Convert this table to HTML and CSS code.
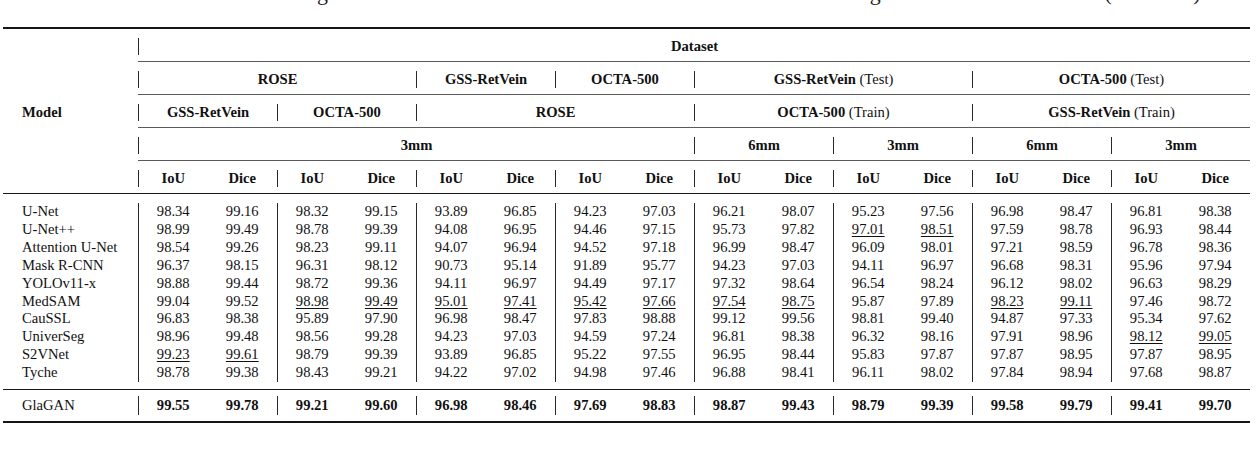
FILE: index.html
```html
<!DOCTYPE html>
<html>
<head>
<meta charset="utf-8">
<link rel="stylesheet" href="styles.css">
</head>
<body>
<div class="caption"><div class="caption-line">Results of the vessel segmentation on three OCTA datasets and the cross-dataset settings on the external test sets (IoU/Dice)</div></div>
<table class="results">
<colgroup><col class="col-model"><col span="16"></colgroup>
<thead>
<tr class="hr"><th rowspan="5" class="model">Model</th><th colspan="16"><div class="c bar">Dataset</div></th></tr>
<tr class="hr">
<th colspan="4"><div class="c bar">ROSE</div></th>
<th colspan="2"><div class="c bar">GSS-RetVein</div></th>
<th colspan="2"><div class="c bar">OCTA-500</div></th>
<th colspan="4"><div class="c bar">GSS-RetVein <span class="reg">(Test)</span></div></th>
<th colspan="4"><div class="c bar">OCTA-500 <span class="reg">(Test)</span></div></th>
</tr>
<tr class="hr">
<th colspan="2"><div class="c bar">GSS-RetVein</div></th>
<th colspan="2"><div class="c bar">OCTA-500</div></th>
<th colspan="4"><div class="c bar">ROSE</div></th>
<th colspan="4"><div class="c bar">OCTA-500 <span class="reg">(Train)</span></div></th>
<th colspan="4"><div class="c bar">GSS-RetVein <span class="reg">(Train)</span></div></th>
</tr>
<tr class="hr">
<th colspan="8"><div class="c bar">3mm</div></th>
<th colspan="2"><div class="c bar">6mm</div></th>
<th colspan="2"><div class="c bar">3mm</div></th>
<th colspan="2"><div class="c bar">6mm</div></th>
<th colspan="2"><div class="c bar">3mm</div></th>
</tr>
<tr class="hr last">
<th><div class="c bar">IoU</div></th><th><div class="c">Dice</div></th>
<th><div class="c bar">IoU</div></th><th><div class="c">Dice</div></th>
<th><div class="c bar">IoU</div></th><th><div class="c">Dice</div></th>
<th><div class="c bar">IoU</div></th><th><div class="c">Dice</div></th>
<th><div class="c bar">IoU</div></th><th><div class="c">Dice</div></th>
<th><div class="c bar">IoU</div></th><th><div class="c">Dice</div></th>
<th><div class="c bar">IoU</div></th><th><div class="c">Dice</div></th>
<th><div class="c bar">IoU</div></th><th><div class="c">Dice</div></th>
</tr>
</thead>
<tbody>
<tr class="first"><td class="name"><div class="c">U-Net</div></td>
<td><div class="c bar">98.34</div></td><td><div class="c">99.16</div></td>
<td><div class="c bar">98.32</div></td><td><div class="c">99.15</div></td>
<td><div class="c bar">93.89</div></td><td><div class="c">96.85</div></td>
<td><div class="c bar">94.23</div></td><td><div class="c">97.03</div></td>
<td><div class="c bar">96.21</div></td><td><div class="c">98.07</div></td>
<td><div class="c bar">95.23</div></td><td><div class="c">97.56</div></td>
<td><div class="c bar">96.98</div></td><td><div class="c">98.47</div></td>
<td><div class="c bar">96.81</div></td><td><div class="c">98.38</div></td>
</tr>
<tr><td class="name"><div class="c">U-Net++</div></td>
<td><div class="c bar">98.99</div></td><td><div class="c">99.49</div></td>
<td><div class="c bar">98.78</div></td><td><div class="c">99.39</div></td>
<td><div class="c bar">94.08</div></td><td><div class="c">96.95</div></td>
<td><div class="c bar">94.46</div></td><td><div class="c">97.15</div></td>
<td><div class="c bar">95.73</div></td><td><div class="c">97.82</div></td>
<td><div class="c bar"><span class="second">97.01</span></div></td><td><div class="c"><span class="second">98.51</span></div></td>
<td><div class="c bar">97.59</div></td><td><div class="c">98.78</div></td>
<td><div class="c bar">96.93</div></td><td><div class="c">98.44</div></td>
</tr>
<tr><td class="name"><div class="c">Attention U-Net</div></td>
<td><div class="c bar">98.54</div></td><td><div class="c">99.26</div></td>
<td><div class="c bar">98.23</div></td><td><div class="c">99.11</div></td>
<td><div class="c bar">94.07</div></td><td><div class="c">96.94</div></td>
<td><div class="c bar">94.52</div></td><td><div class="c">97.18</div></td>
<td><div class="c bar">96.99</div></td><td><div class="c">98.47</div></td>
<td><div class="c bar">96.09</div></td><td><div class="c">98.01</div></td>
<td><div class="c bar">97.21</div></td><td><div class="c">98.59</div></td>
<td><div class="c bar">96.78</div></td><td><div class="c">98.36</div></td>
</tr>
<tr><td class="name"><div class="c">Mask R-CNN</div></td>
<td><div class="c bar">96.37</div></td><td><div class="c">98.15</div></td>
<td><div class="c bar">96.31</div></td><td><div class="c">98.12</div></td>
<td><div class="c bar">90.73</div></td><td><div class="c">95.14</div></td>
<td><div class="c bar">91.89</div></td><td><div class="c">95.77</div></td>
<td><div class="c bar">94.23</div></td><td><div class="c">97.03</div></td>
<td><div class="c bar">94.11</div></td><td><div class="c">96.97</div></td>
<td><div class="c bar">96.68</div></td><td><div class="c">98.31</div></td>
<td><div class="c bar">95.96</div></td><td><div class="c">97.94</div></td>
</tr>
<tr><td class="name"><div class="c">YOLOv11-x</div></td>
<td><div class="c bar">98.88</div></td><td><div class="c">99.44</div></td>
<td><div class="c bar">98.72</div></td><td><div class="c">99.36</div></td>
<td><div class="c bar">94.11</div></td><td><div class="c">96.97</div></td>
<td><div class="c bar">94.49</div></td><td><div class="c">97.17</div></td>
<td><div class="c bar">97.32</div></td><td><div class="c">98.64</div></td>
<td><div class="c bar">96.54</div></td><td><div class="c">98.24</div></td>
<td><div class="c bar">96.12</div></td><td><div class="c">98.02</div></td>
<td><div class="c bar">96.63</div></td><td><div class="c">98.29</div></td>
</tr>
<tr><td class="name"><div class="c">MedSAM</div></td>
<td><div class="c bar">99.04</div></td><td><div class="c">99.52</div></td>
<td><div class="c bar"><span class="second">98.98</span></div></td><td><div class="c"><span class="second">99.49</span></div></td>
<td><div class="c bar"><span class="second">95.01</span></div></td><td><div class="c"><span class="second">97.41</span></div></td>
<td><div class="c bar"><span class="second">95.42</span></div></td><td><div class="c"><span class="second">97.66</span></div></td>
<td><div class="c bar"><span class="second">97.54</span></div></td><td><div class="c"><span class="second">98.75</span></div></td>
<td><div class="c bar">95.87</div></td><td><div class="c">97.89</div></td>
<td><div class="c bar"><span class="second">98.23</span></div></td><td><div class="c"><span class="second">99.11</span></div></td>
<td><div class="c bar">97.46</div></td><td><div class="c">98.72</div></td>
</tr>
<tr><td class="name"><div class="c">CauSSL</div></td>
<td><div class="c bar">96.83</div></td><td><div class="c">98.38</div></td>
<td><div class="c bar">95.89</div></td><td><div class="c">97.90</div></td>
<td><div class="c bar">96.98</div></td><td><div class="c">98.47</div></td>
<td><div class="c bar">97.83</div></td><td><div class="c">98.88</div></td>
<td><div class="c bar">99.12</div></td><td><div class="c">99.56</div></td>
<td><div class="c bar">98.81</div></td><td><div class="c">99.40</div></td>
<td><div class="c bar">94.87</div></td><td><div class="c">97.33</div></td>
<td><div class="c bar">95.34</div></td><td><div class="c">97.62</div></td>
</tr>
<tr><td class="name"><div class="c">UniverSeg</div></td>
<td><div class="c bar">98.96</div></td><td><div class="c">99.48</div></td>
<td><div class="c bar">98.56</div></td><td><div class="c">99.28</div></td>
<td><div class="c bar">94.23</div></td><td><div class="c">97.03</div></td>
<td><div class="c bar">94.59</div></td><td><div class="c">97.24</div></td>
<td><div class="c bar">96.81</div></td><td><div class="c">98.38</div></td>
<td><div class="c bar">96.32</div></td><td><div class="c">98.16</div></td>
<td><div class="c bar">97.91</div></td><td><div class="c">98.96</div></td>
<td><div class="c bar"><span class="second">98.12</span></div></td><td><div class="c"><span class="second">99.05</span></div></td>
</tr>
<tr><td class="name"><div class="c">S2VNet</div></td>
<td><div class="c bar"><span class="second">99.23</span></div></td><td><div class="c"><span class="second">99.61</span></div></td>
<td><div class="c bar">98.79</div></td><td><div class="c">99.39</div></td>
<td><div class="c bar">93.89</div></td><td><div class="c">96.85</div></td>
<td><div class="c bar">95.22</div></td><td><div class="c">97.55</div></td>
<td><div class="c bar">96.95</div></td><td><div class="c">98.44</div></td>
<td><div class="c bar">95.83</div></td><td><div class="c">97.87</div></td>
<td><div class="c bar">97.87</div></td><td><div class="c">98.95</div></td>
<td><div class="c bar">97.87</div></td><td><div class="c">98.95</div></td>
</tr>
<tr class="lastdata"><td class="name"><div class="c">Tyche</div></td>
<td><div class="c bar">98.78</div></td><td><div class="c">99.38</div></td>
<td><div class="c bar">98.43</div></td><td><div class="c">99.21</div></td>
<td><div class="c bar">94.22</div></td><td><div class="c">97.02</div></td>
<td><div class="c bar">94.98</div></td><td><div class="c">97.46</div></td>
<td><div class="c bar">96.88</div></td><td><div class="c">98.41</div></td>
<td><div class="c bar">96.11</div></td><td><div class="c">98.02</div></td>
<td><div class="c bar">97.84</div></td><td><div class="c">98.94</div></td>
<td><div class="c bar">97.68</div></td><td><div class="c">98.87</div></td>
</tr>
</tbody>
<tbody class="ours">
<tr><td class="name"><div class="c">GlaGAN</div></td>
<td><div class="c bar">99.55</div></td><td><div class="c">99.78</div></td>
<td><div class="c bar">99.21</div></td><td><div class="c">99.60</div></td>
<td><div class="c bar">96.98</div></td><td><div class="c">98.46</div></td>
<td><div class="c bar">97.69</div></td><td><div class="c">98.83</div></td>
<td><div class="c bar">98.87</div></td><td><div class="c">99.43</div></td>
<td><div class="c bar">98.79</div></td><td><div class="c">99.39</div></td>
<td><div class="c bar">99.58</div></td><td><div class="c">99.79</div></td>
<td><div class="c bar">99.41</div></td><td><div class="c">99.70</div></td>
</tr>
</tbody>
</table>
</body>
</html>
```

FILE: styles.css
```css
html, body {
  margin: 0;
  padding: 0;
  background: #ffffff;
}

body {
  font-family: "Liberation Serif", "Times New Roman", serif;
  color: #111111;
}

.caption {
  height: 7px;
  overflow: hidden;
  padding-left: 114px;
}

.caption-line {
  font-size: 21.9px;
  line-height: 22px;
  margin-top: -18px;
  white-space: nowrap;
  color: #222222;
}

.results {
  margin: 20px 0 0 3px;
  width: 1247px;
  table-layout: fixed;
  border-collapse: separate;
  border-spacing: 0;
  border-top: 2px solid #151515;
  border-bottom: 2px solid #151515;
  font-size: 14.6px;
}

.col-model {
  width: 135px;
}

.results th,
.results td {
  padding: 0;
  text-align: center;
  white-space: nowrap;
}

.results th {
  font-weight: bold;
}

.reg {
  font-weight: normal;
}

.c {
  text-align: center;
}

.bar {
  border-left: 1px solid #2a2a2a;
}

/* header rows */
.hr th {
  padding-top: 8.5px;
  padding-bottom: 6.5px;
  border-bottom: 1px solid #5a5a5a;
}

.hr th .c {
  line-height: 17px;
}

.hr.last th,
.hr th.model {
  border-bottom: 1px solid #1a1a1a;
}

.hr th.model {
  text-align: left;
  padding-left: 19px;
  vertical-align: middle;
}

/* data rows */
.results td .c {
  line-height: 17.9px;
}

.results td.name .c {
  text-align: left;
  padding-left: 19px;
}

.results tr.first td {
  padding-top: 9px;
}

.results tr.lastdata td {
  padding-bottom: 7px;
  border-bottom: 1px solid #1a1a1a;
}

.second {
  text-decoration: underline;
  text-decoration-thickness: 1px;
  text-underline-offset: 2px;
}

/* our method row */
.ours td {
  padding-top: 6px;
  padding-bottom: 6px;
  font-weight: bold;
}

.ours td.name {
  font-weight: normal;
}

.ours td .c {
  line-height: 19px;
}
```
